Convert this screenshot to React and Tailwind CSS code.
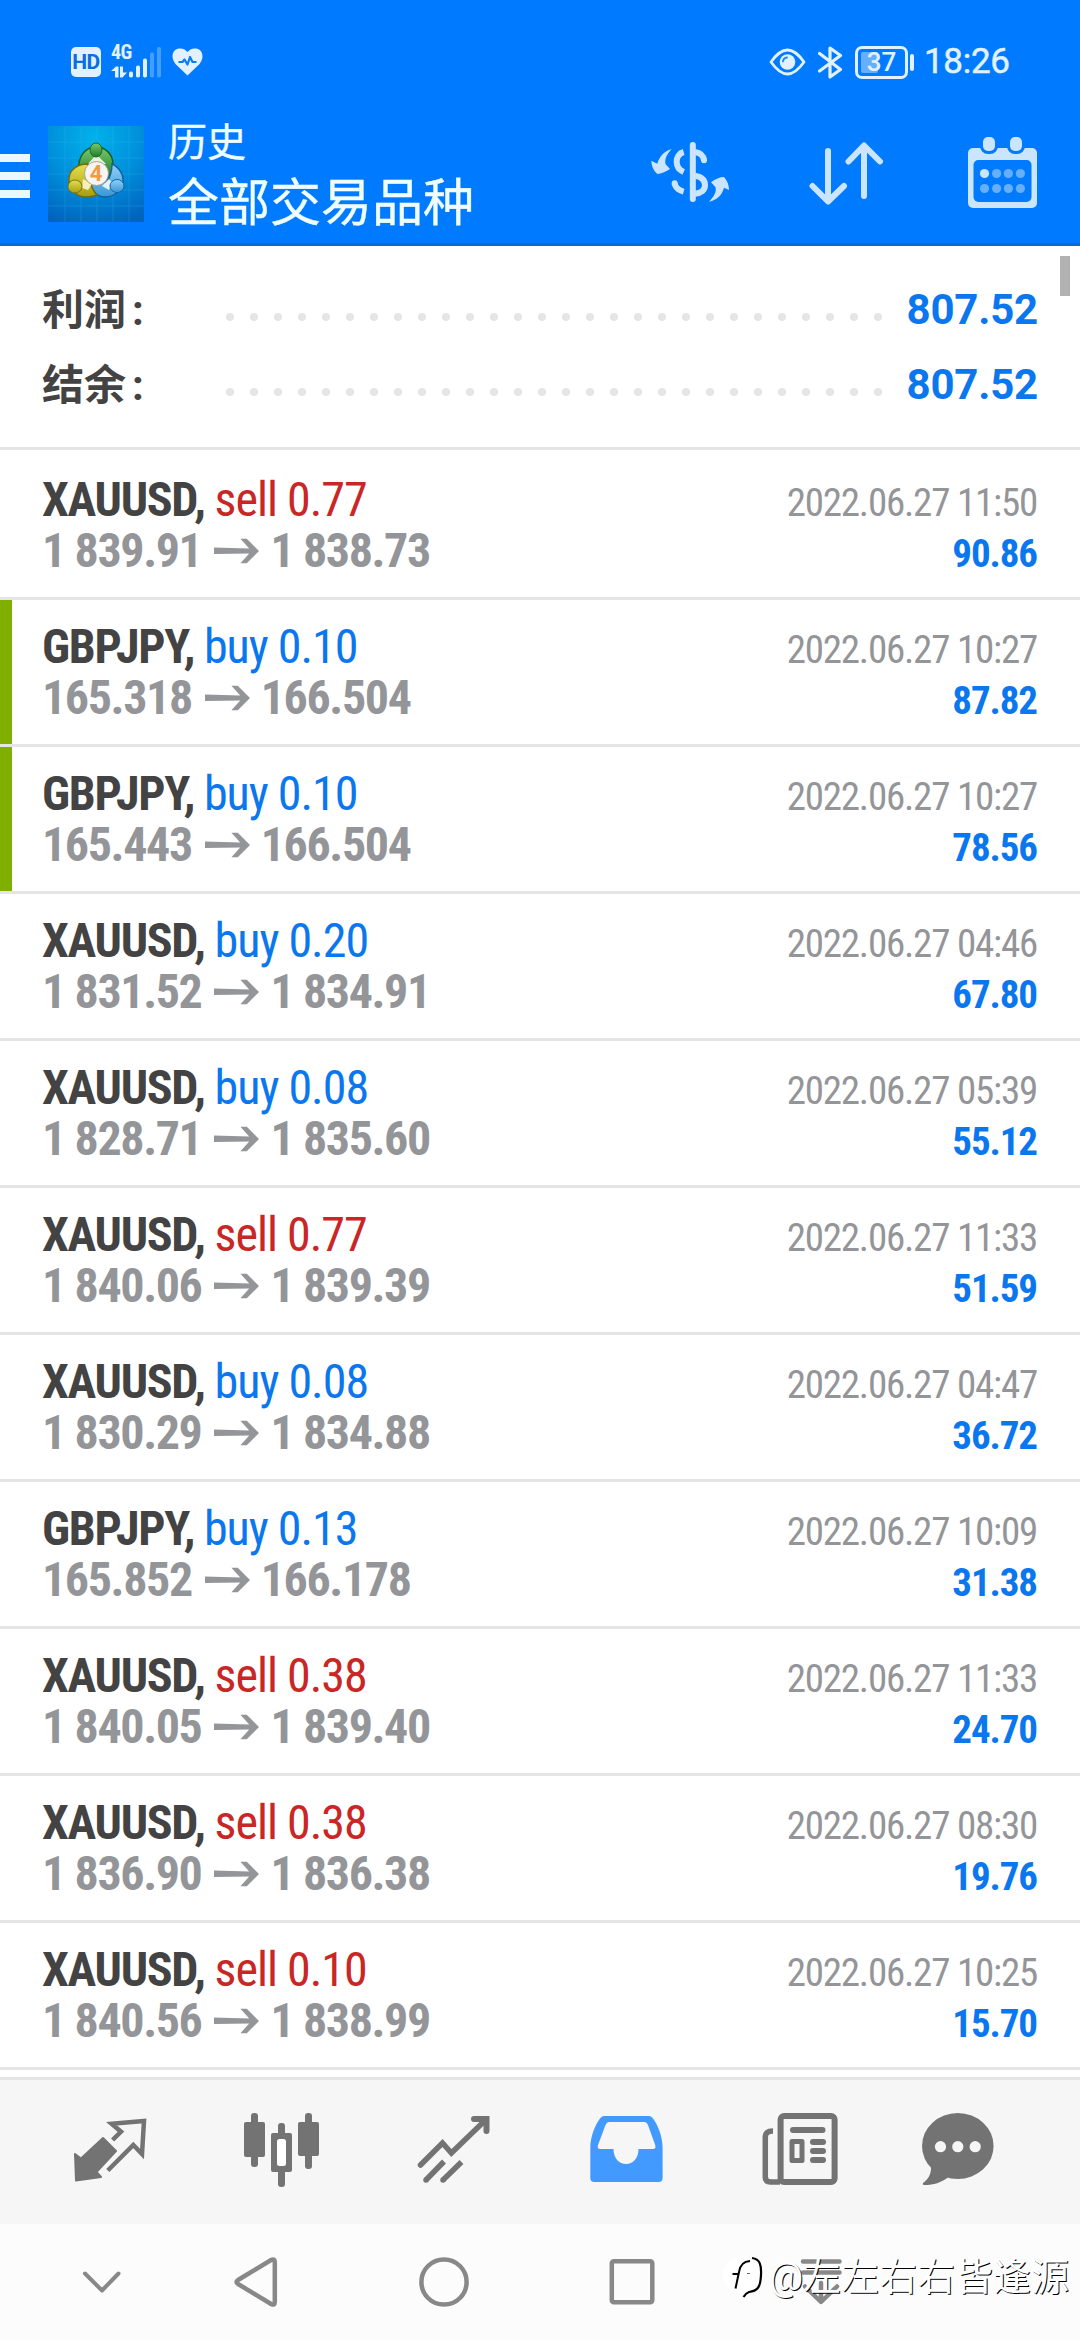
const deals = [
    { symbol: 'XAUUSD', type: 'sell', lots: '0.77', open: '1 839.91', close: '1 838.73', time: '2022.06.27 11:50', profit: '90.86' },
    { symbol: 'GBPJPY', type: 'buy', lots: '0.10', open: '165.318', close: '166.504', time: '2022.06.27 10:27', profit: '87.82', marked: true },
    { symbol: 'GBPJPY', type: 'buy', lots: '0.10', open: '165.443', close: '166.504', time: '2022.06.27 10:27', profit: '78.56', marked: true },
    { symbol: 'XAUUSD', type: 'buy', lots: '0.20', open: '1 831.52', close: '1 834.91', time: '2022.06.27 04:46', profit: '67.80' },
    { symbol: 'XAUUSD', type: 'buy', lots: '0.08', open: '1 828.71', close: '1 835.60', time: '2022.06.27 05:39', profit: '55.12' },
    { symbol: 'XAUUSD', type: 'sell', lots: '0.77', open: '1 840.06', close: '1 839.39', time: '2022.06.27 11:33', profit: '51.59' },
    { symbol: 'XAUUSD', type: 'buy', lots: '0.08', open: '1 830.29', close: '1 834.88', time: '2022.06.27 04:47', profit: '36.72' },
    { symbol: 'GBPJPY', type: 'buy', lots: '0.13', open: '165.852', close: '166.178', time: '2022.06.27 10:09', profit: '31.38' },
    { symbol: 'XAUUSD', type: 'sell', lots: '0.38', open: '1 840.05', close: '1 839.40', time: '2022.06.27 11:33', profit: '24.70' },
    { symbol: 'XAUUSD', type: 'sell', lots: '0.38', open: '1 836.90', close: '1 836.38', time: '2022.06.27 08:30', profit: '19.76' },
    { symbol: 'XAUUSD', type: 'sell', lots: '0.10', open: '1 840.56', close: '1 838.99', time: '2022.06.27 10:25', profit: '15.70' },
];

const summary = [
    { label: '利润', value: '807.52' },
    { label: '结余', value: '807.52' },
];

const StatusBar = () => {
    return (
        <div className="h-[124px] flex items-center pl-[71px] text-[#e2f1ff]">
            <div className="size-[30px] rounded-[5px] bg-[#e2f1ff] text-[#0a6ce0] text-[21px] leading-[30px] font-bold text-center tracking-[-0.5px]">HD</div>
            <div className="ml-[10px] w-[51px] h-[32px] relative">
                <span className="absolute left-0 -top-[2px] text-[20px] leading-[17px] font-bold tracking-[-0.5px] [font-stretch:75%]">4G</span>
                <svg className="size-full" viewBox="0 0 51 32" fill="currentColor">
                    <path d="M0 25 L5 20.500 H7.500 V31.500 H4 V25 Z M9 20.500 H12 V26.500 H16 L11.500 31.500 H9 Z" />
                    <rect x="18" y="25.500" width="4" height="6" rx="1.800" />
                    <rect x="25" y="19.500" width="4" height="12" rx="1.800" />
                    <rect x="32" y="12.500" width="4" height="19" rx="1.800" />
                    <rect x="39" y="6.500" width="4" height="25" rx="1.800" opacity=".3" />
                    <rect x="46" y="1" width="4" height="30.500" rx="1.800" opacity=".3" />
                </svg>
            </div>
            <svg className="ml-[10px] w-[31px] h-[28px]" viewBox="0 0 31 28">
                <path d="M15.500 27.500 L3.500 16 C-1.500 10 0 2 6.500 .600 C10.500 -.200 13.500 1.500 15.500 4 C17.500 1.500 20.500 -.200 24.500 .600 C31 2 32.500 10 27.500 16 Z" fill="currentColor" />
                <path d="M6.500 14 H10.500 L12.500 11.500 L15.500 16.500 L18 9 L20.500 14 H24.500" fill="none" stroke="#0a7cf0" strokeWidth="2.200" strokeLinejoin="round" />
            </svg>
            <svg className="ml-[566px] w-[37px] h-[28px]" viewBox="0 0 37 28">
                <path d="M2 14 C8 5.500 13 2 18.500 2 C24 2 29 5.500 35 14 C29 22.500 24 26 18.500 26 C13 26 8 22.500 2 14 Z" fill="none" stroke="currentColor" strokeWidth="2.800" strokeLinejoin="round" />
                <circle cx="18.500" cy="14" r="7.800" fill="currentColor" />
                <path d="M14 13.500 A4.500 4.500 0 0 1 18 9.500" fill="none" stroke="#1f86f5" strokeWidth="1.800" strokeLinecap="round" />
            </svg>
            <svg className="ml-[12px] w-[25px] h-[33px]" viewBox="0 0 25 33" fill="none" stroke="currentColor" strokeWidth="3.200" strokeLinejoin="round" strokeLinecap="round">
                <path d="M1.600 7.500 L22.500 23.500 L12 31 V2 L22.500 9.500 L1.600 25" />
            </svg>
            <div className="ml-[12px] relative w-[53px] h-[33px] border-[3px] border-[#e2f1ff] rounded-[7px]">
                <span className="absolute left-[3px] top-[3px] w-[17px] h-[21px] rounded-[2px] bg-[#66aeff]" />
                <span className="absolute inset-0 text-[26px] leading-[26px] font-medium text-center">37</span>
            </div>
            <span className="ml-[2px] w-1 h-[17px] rounded-full bg-[#e2f1ff]" />
            <span className="ml-[10px] text-[35px] leading-[40px] tracking-[-0.3px] [-webkit-text-stroke:0.5px]">18:26</span>
        </div>
    );
};

const Logo = () => {
    return (
        <svg className="size-24 ml-[18px] mt-[2px]" viewBox="0 0 96 96">
            <defs>
                <radialGradient id="logoBg" cx=".48" cy=".12" r=".95">
                    <stop offset="0" stopColor="#00b2ea" />
                    <stop offset=".5" stopColor="#0090dc" />
                    <stop offset="1" stopColor="#0063bf" />
                </radialGradient>
                <linearGradient id="green" x1="0" y1="0" x2="0" y2="1">
                    <stop offset="0" stopColor="#7cc96e" />
                    <stop offset="1" stopColor="#1d7d28" />
                </linearGradient>
                <linearGradient id="yellow" x1="0" y1="0" x2="0" y2="1">
                    <stop offset="0" stopColor="#e3e04e" />
                    <stop offset="1" stopColor="#a89c12" />
                </linearGradient>
                <linearGradient id="blue" x1="0" y1="0" x2="0" y2="1">
                    <stop offset="0" stopColor="#8fd2f7" />
                    <stop offset="1" stopColor="#3a96d6" />
                </linearGradient>
            </defs>
            <rect width="96" height="96" fill="url(#logoBg)" />
            <path d="M17 0V96M33 0V96M49 0V96M65 0V96M81 0V96M0 16H96M0 32H96M0 48H96M0 64H96M0 80H96" stroke="#4fc0f0" strokeWidth="1" opacity=".22" />
            <path d="M31 42 C30 31 37 21 48 21 C58 21 65 29 65 38 C65 43 63 48 60 51 L38 42 Z" fill="url(#green)" stroke="#176124" strokeWidth="1.500" />
            <path d="M40 38 L46 31 H51 L58 38 Z" fill="#e7f3dc" />
            <path d="M64 38 C71 41 76 49 75 57 C74 65 65 71 57 71 C50 71 44 66 42 58 L59 56 C62 51 64 45 64 38 Z" fill="url(#blue)" stroke="#1660a0" strokeWidth="1.500" />
            <path d="M40 38 C30 38 22 43 21 52 C20 62 28 71 38 71 C42 71 46 70 49 69 C46 66 44 62 42 56 Z" fill="url(#yellow)" stroke="#736c0d" strokeWidth="1.500" />
            <path d="M34 62 L35 53 L44 58 L40 64 Z" fill="#f4f0b9" />
            <path d="M54 60 L61 53 L64 57 L61 64 Z" fill="#e2f3fd" />
            <ellipse cx="48" cy="24" rx="6" ry="7" fill="url(#green)" stroke="#1b6b28" />
            <ellipse cx="27" cy="60.500" rx="7" ry="6.500" fill="url(#yellow)" stroke="#7d760f" />
            <ellipse cx="69" cy="60" rx="7" ry="6.500" fill="url(#blue)" stroke="#1565a3" />
            <circle cx="48.500" cy="47.500" r="12" fill="#f6f5f3" stroke="#9a8f80" strokeWidth=".800" />
            <text x="48" y="55" textAnchor="middle" fontFamily="Roboto" fontWeight="700" fontSize="22" fill="#f29b3f">4</text>
        </svg>
    );
};

const Header = () => {
    return (
        <header className="bg-[#007aff] border-b-[3px] border-[#096cd9]">
            <StatusBar />
            <div className="h-[119px] flex items-start text-[#cce5ff]">
                <div className="mt-[30px] w-[30px] flex flex-col gap-[10px]">
                    <span className="h-2 bg-[#eaf8ff]" />
                    <span className="h-2 bg-[#eaf8ff]" />
                    <span className="h-2 bg-[#eaf8ff]" />
                </div>
                <Logo />
                <div className="ml-[24px] w-[483px] text-[#f0fdff] [-webkit-text-stroke:0.4px]">
                    <div className="text-[39px] leading-[40px] -mt-[1px]">历史</div>
                    <div className="mt-[11px] text-[51px] leading-[60px]">全部交易品种</div>
                </div>
                <svg className="mt-[18px] w-[78px] h-[60px]" viewBox="33 66 234 180" fill="none" stroke="currentColor" strokeWidth="18">
                    <path d="M158.500 75 V237" strokeLinecap="round" />
                    <path d="M131 96 C117 100 110 112 110 125 C110 140 118 150 131 156" />
                    <path d="M165 96 C180 98 190 106 192 121" />
                    <path d="M192 120 V121" strokeLinecap="round" />
                    <path d="M165 167 C184 170 195 180 195 196 C195 210 183 220 165 221" />
                    <path d="M131 215 C116 211 107 204 104 191" />
                    <path d="M104 191 V190" strokeLinecap="round" />
                    <path d="M95 87 C80 103 73 118 77 133 L90 147 C76 156 64 161 52 162 C40 151 34 138 34 122 L52 131 C58 110 72 94 95 87 Z" fill="currentColor" stroke="none" />
                    <path d="M207 245 C222 230 231 214 226 201 L213 187 C226 177 240 171 252 171 C262 182 267 196 267 210 L252 203 C246 225 232 239 207 245 Z" fill="currentColor" stroke="none" />
                </svg>
                <svg className="mt-[18px] ml-[80px] w-[75px] h-[63px]" viewBox="0 0 75 63" fill="none" stroke="currentColor" strokeWidth="6" strokeLinecap="round" strokeLinejoin="round">
                    <path d="M19 9 V59 M3.500 44 L19 59.500 L35 44" />
                    <path d="M55 4 V54 M39.500 19.500 L55 3.500 L71 19.500" />
                </svg>
                <svg className="mt-[13px] ml-[84px] w-[69px] h-[71px]" viewBox="0 0 69 71" fill="currentColor">
                    <rect x="0" y="11" width="69" height="60" rx="5" />
                    <rect x="5.500" y="23" width="58" height="42" rx="5" fill="#007aff" />
                    <rect x="12" y="-3" width="18" height="20" rx="8" fill="#007aff" />
                    <rect x="39" y="-3" width="18" height="20" rx="8" fill="#007aff" />
                    <rect x="15" y="0" width="12" height="14" rx="5" />
                    <rect x="42" y="0" width="12" height="14" rx="5" />
                    <circle cx="16.500" cy="36.500" r="4.600" />
                    <g fill="#66afff">
                        <circle cx="28.600" cy="36.500" r="4.600" />
                        <circle cx="40.400" cy="36.500" r="4.600" />
                        <circle cx="52.400" cy="36.500" r="4.600" />
                        <circle cx="16.500" cy="51.500" r="4.600" />
                        <circle cx="28.600" cy="51.500" r="4.600" />
                        <circle cx="40.400" cy="51.500" r="4.600" />
                        <circle cx="52.400" cy="51.500" r="4.600" />
                    </g>
                </svg>
            </div>
        </header>
    );
};

const Summary = () => {
    return (
        <section className="relative h-[204px] pt-[26px] pl-[42px] pr-[42px] border-b-[3px] border-[#e5e5e5] text-[42px] font-bold">
            {summary.map((row) => (
                <div key={row.label} className="h-[75px] flex items-center">
                    <div className="w-[184px] mt-[2px] text-[#434343]">{row.label}<span className="ml-[6px]">:</span></div>
                    <div className="flex gap-4 mt-[15px]">
                        {Array.from({ length: 28 }).map((_, i) => (
                            <span key={i} className="size-2 rounded-full bg-[#e5e5e5]" />
                        ))}
                    </div>
                    <div className="flex-1 text-right tracking-[-0.2px] text-[#0b77ee]">{row.value}</div>
                </div>
            ))}
            <div className="absolute right-[10px] top-[10px] w-[10px] h-[40px] bg-[#b2b2b2]" />
        </section>
    );
};

const Deal = ({ deal }) => {
    return (
        <div className="relative h-[147px] flex justify-between pl-[42px] pr-[43px] border-b-[3px] border-[#e5e5e5] [font-stretch:75%]">
            {deal.marked && <span className="absolute left-0 inset-y-0 w-3 bg-[#7fb000]" />}
            <div className="pt-[21px] text-[48px] leading-[51px]">
                <div>
                    <span className="font-bold tracking-[-0.027em] text-[#434343]">{deal.symbol}, </span>
                    <span className={`tracking-[-0.021em] ${deal.type === 'sell' ? 'text-[#c92626]' : 'text-[#0b77ee]'}`}>{deal.type} {deal.lots}</span>
                </div>
                <div className="flex items-center font-bold tracking-[-0.029em] text-[#949599]">
                    {deal.open}
                    <svg className="ml-[13px] mr-[11px] w-[45px] h-[26px]" viewBox="0 0 46 26" fill="currentColor">
                        <path d="M0 9.500 L36 10.500 L27 0.500 H33.500 L46 13 L33.500 25.500 H27 L36 15.500 L0 16 Z" />
                    </svg>
                    {deal.close}
                </div>
            </div>
            <div className="pt-[25px] text-[39px] leading-[51px] text-right">
                <div className="tracking-[-0.031em] text-[#949599]">{deal.time}</div>
                <div className="font-bold tracking-[-0.028em] text-[#0b77ee]">{deal.profit}</div>
            </div>
        </div>
    );
};

const TabBar = () => {
    return (
        <nav className="h-[147px] border-t-[3px] border-[#e5e5e5] bg-[#f6f6f6] flex items-center gap-[76px] pl-[62px] text-[#737373]">
            <svg className="size-24 shrink-0" viewBox="0 0 96 96">
                <path d="M13 50 L19 54.500 L41 34 L54 47 L34.500 68 L39 73 L14 76.500 Z" fill="currentColor" stroke="currentColor" strokeWidth="2" strokeLinejoin="round" />
                <path d="M50.600 36 L59 27.700 L49.600 19.700 L82 17 L80 50 L71.300 41 L45.800 66.500" fill="none" stroke="currentColor" strokeWidth="4.500" />
            </svg>
            <svg className="size-24 shrink-0" viewBox="0 0 96 96" fill="currentColor">
                <rect x="17" y="9" width="7" height="54" rx="3" />
                <rect x="10" y="18" width="21" height="35" rx="2" />
                <rect x="44" y="19" width="7" height="64" rx="3" />
                <rect x="37" y="29" width="21" height="39" rx="2" />
                <rect x="43" y="35" width="9" height="27" rx="2.500" fill="#fff" />
                <rect x="71" y="9" width="7" height="56" rx="3" />
                <rect x="64" y="18" width="21" height="34" rx="2" />
            </svg>
            <svg className="size-24 shrink-0" viewBox="0 0 96 96" fill="none" stroke="currentColor" strokeWidth="5.500">
                <path d="M14.500 61 L36.500 39 L45.400 49 L80 15.500" strokeLinecap="round" />
                <path d="M68 15 H80.500 V27" strokeWidth="6" strokeLinecap="round" />
                <path d="M20 76 L38 57.500 M37 76 L55.500 58" />
                <path d="M20 76 h.01 M37 76 h.01" strokeLinecap="round" />
            </svg>
            <svg className="size-24 shrink-0 text-[#429aff]" viewBox="0 0 96 96">
                <path fillRule="evenodd" fill="currentColor" d="M12.300 74 V44 C12.300 33 17 21 22 14.500 C23.500 12.500 25 12 27.500 12 H69.500 C72 12 73.500 12.500 75 14.500 C80 21 84.600 33 84.600 44 V74 Q84.600 78 80.500 78 H16.500 Q12.300 78 12.300 74 Z M33 18 C30 18 28.500 18.500 27.500 21 L20 41 C19.200 43.500 20 45 22 45 H35.500 C35.500 54 41 60 48 60 C55 60 60.500 54 60.500 45 H75 C77.200 45 78 43.500 77.200 41 L70 21 C69 18.500 67.500 18 64.500 18 Z" />
            </svg>
            <svg className="size-24 shrink-0" viewBox="0 0 96 96" fill="currentColor">
                <g fill="none" stroke="currentColor">
                    <rect x="30.600" y="12" width="54" height="66" rx="3.500" strokeWidth="6" />
                    <path d="M23 27 C18 27 15.300 29 15.300 33 V73 Q15.300 78 20.500 78 H30" strokeWidth="5.500" />
                    <rect x="42" y="37.500" width="10" height="19" strokeWidth="5" strokeLinejoin="round" />
                </g>
                <rect x="40" y="23" width="35.500" height="6" rx="3" />
                <rect x="60" y="35" width="16" height="6" rx="3" />
                <rect x="60" y="44" width="16" height="6" rx="3" />
                <rect x="60" y="53" width="16" height="6" rx="3" />
            </svg>
            <svg className="size-24 shrink-0" viewBox="0 0 96 96" fill="currentColor">
                <ellipse cx="35.800" cy="42" rx="35.800" ry="33" />
                <path d="M9 62 C9.500 70 6.500 75 1 79 C.500 80.500 1 81 2.500 81 C12 81 19 78.500 26 73.500 Z" />
                <g fill="#f6f6f6">
                    <circle cx="18.500" cy="42.700" r="5.600" />
                    <circle cx="35.800" cy="42.700" r="5.600" />
                    <circle cx="53.200" cy="42.700" r="5.600" />
                </g>
            </svg>
        </nav>
    );
};

const SystemNav = () => {
    return (
        <div className="relative h-[116px] bg-[#fcfcfc] flex items-center gap-[128px] pl-[72px] text-[#888]">
            <svg className="size-15 shrink-0 -mr-[34px]" viewBox="0 0 60 60" fill="none" stroke="currentColor" strokeWidth="4" strokeLinecap="round" strokeLinejoin="round">
                <path d="M13 21.500 L30 38.500 L46.500 21.500" />
            </svg>
            <svg className="size-15 shrink-0" viewBox="0 0 60 60" fill="none" stroke="currentColor" strokeWidth="4.500" strokeLinejoin="round">
                <path d="M12 28 L45.500 7.800 Q48.800 6.500 48.800 10 V50 Q48.800 53.500 45.500 52.200 L12 32 Q9 30 12 28 Z" />
            </svg>
            <svg className="size-15 shrink-0" viewBox="0 0 60 60" fill="none" stroke="currentColor" strokeWidth="4.500">
                <circle cx="30" cy="30" r="22.600" />
            </svg>
            <svg className="size-15 shrink-0" viewBox="0 0 60 60" fill="none" stroke="currentColor" strokeWidth="4.500">
                <rect x="9.800" y="9.300" width="40.500" height="41" rx="2" />
            </svg>
            <svg className="size-15 shrink-0" viewBox="0 0 60 60" fill="none" stroke="currentColor" strokeWidth="4.500" strokeLinecap="round" strokeLinejoin="round">
                <path d="M13 9.600 H49.500 M13 20.500 H49.500 M31 31 V49 M15 34.500 L31 50 L47 34.500" />
            </svg>
            <div className="absolute left-[723px] top-[30px] flex items-center text-white">
                <svg className="w-[46px] h-[46px]" viewBox="0 0 46 46">
                    <circle cx="19" cy="21" r="19" fill="#fff" />
                    <path d="M9.500 20 H15 M12.500 34.500 L16 18 C17 11 20 7.500 27 7" fill="none" stroke="#000" strokeWidth="2" />
                    <path d="M29 4 C37 5 38.500 11 38 21 C37.500 34 34 37 26 38 Q23 39 20.500 43" fill="none" stroke="#000" strokeWidth="2.200" />
                    <path d="M24 19.500 h3" stroke="#666" strokeWidth="1" />
                </svg>
                <span className="text-[38px] leading-[46px] whitespace-nowrap [text-shadow:1px_1px_0_#000]">@左左右右皆逢源</span>
            </div>
        </div>
    );
};

const App = () => {
    return (
        <div className="w-[1080px] h-[2340px] overflow-hidden flex flex-col bg-white font-[Roboto,'Noto_Sans_CJK_SC',sans-serif]">
            <Header />
            <Summary />
            <main className="flex-1 pt-[3px]">
                {deals.map((deal, index) => (
                    <Deal key={index} deal={deal} />
                ))}
            </main>
            <TabBar />
            <SystemNav />
        </div>
    );
};

export default App;
